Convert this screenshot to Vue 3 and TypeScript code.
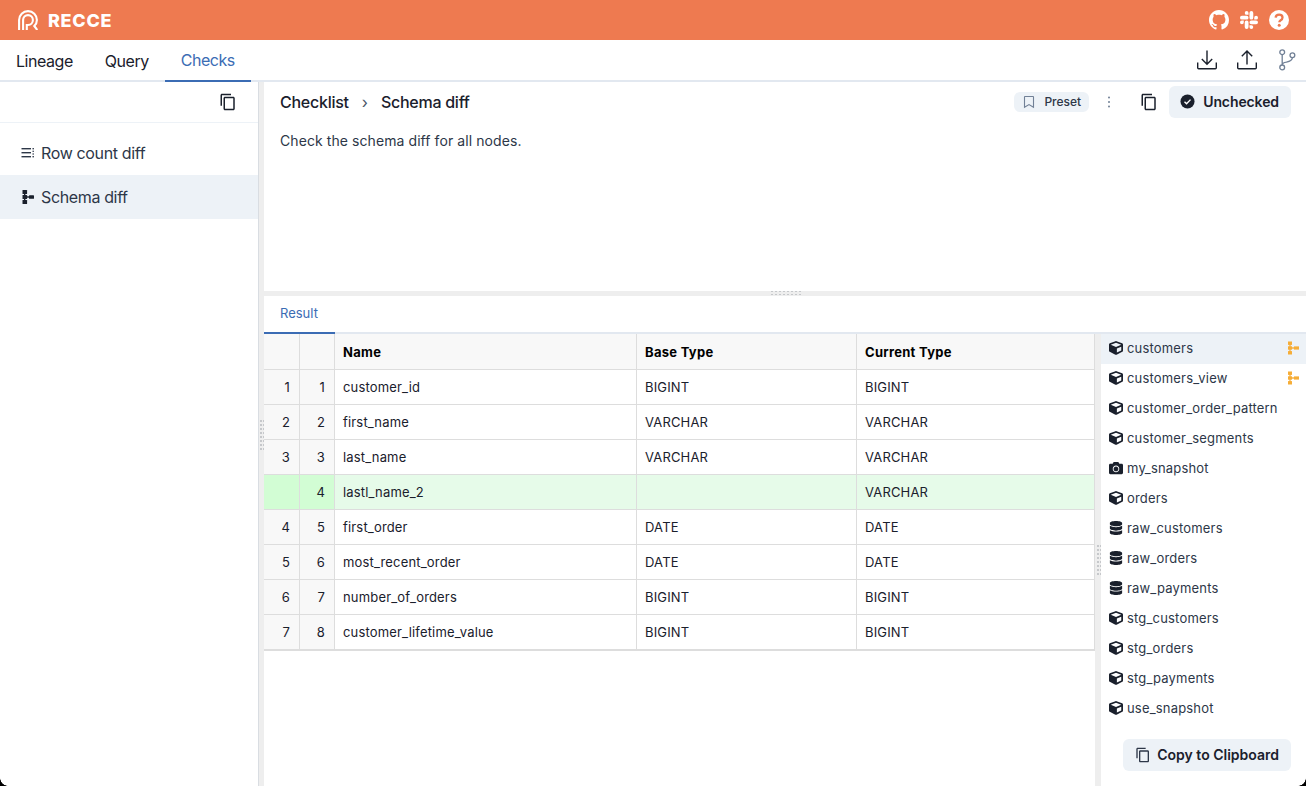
<script setup lang="ts">
type NodeKind = "model" | "snapshot" | "source";

const mainTabs = [
  { label: "Lineage", active: false },
  { label: "Query", active: false },
  { label: "Checks", active: true },
];

const columns = ["Name", "Base Type", "Current Type"];

const rows = [
  { base: "1", current: "1", name: "customer_id", baseType: "BIGINT", currentType: "BIGINT" },
  { base: "2", current: "2", name: "first_name", baseType: "VARCHAR", currentType: "VARCHAR" },
  { base: "3", current: "3", name: "last_name", baseType: "VARCHAR", currentType: "VARCHAR" },
  { base: "", current: "4", name: "lastl_name_2", baseType: "", currentType: "VARCHAR", added: true },
  { base: "4", current: "5", name: "first_order", baseType: "DATE", currentType: "DATE" },
  { base: "5", current: "6", name: "most_recent_order", baseType: "DATE", currentType: "DATE" },
  { base: "6", current: "7", name: "number_of_orders", baseType: "BIGINT", currentType: "BIGINT" },
  { base: "7", current: "8", name: "customer_lifetime_value", baseType: "BIGINT", currentType: "BIGINT" },
];

const nodes: { name: string; kind: NodeKind; changed?: boolean }[] = [
  { name: "customers", kind: "model", changed: true },
  { name: "customers_view", kind: "model", changed: true },
  { name: "customer_order_pattern", kind: "model" },
  { name: "customer_segments", kind: "model" },
  { name: "my_snapshot", kind: "snapshot" },
  { name: "orders", kind: "model" },
  { name: "raw_customers", kind: "source" },
  { name: "raw_orders", kind: "source" },
  { name: "raw_payments", kind: "source" },
  { name: "stg_customers", kind: "model" },
  { name: "stg_orders", kind: "model" },
  { name: "stg_payments", kind: "model" },
  { name: "use_snapshot", kind: "model" },
];

const copyPath =
  "M16 1H4c-1.1 0-2 .9-2 2v14h2V3h12V1zm3 4H8c-1.1 0-2 .9-2 2v14c0 1.1.9 2 2 2h11c1.1 0 2-.9 2-2V7c0-1.1-.9-2-2-2zm0 16H8V7h11v14z";

const kindIcons: Record<NodeKind, { box: string; d: string }> = {
  model: {
    box: "0 0 512 512",
    d: "M239.1 6.3l-208 78c-18.7 7-31.1 25-31.1 45v225.1c0 18.2 10.3 34.8 26.5 42.9l208 104c13.5 6.8 29.4 6.8 42.9 0l208-104c16.3-8.1 26.5-24.8 26.5-42.9V129.3c0-20-12.4-37.9-31.1-44.9l-208-78C262 2.2 250 2.2 239.1 6.3zM256 68.4l192 72v1.1l-192 78-192-78v-1.1l192-72zm32 356V275.5l160-65v133.9l-160 80z",
  },
  snapshot: {
    box: "0 0 512 512",
    d: "M512 144v288c0 26.5-21.5 48-48 48H48c-26.5 0-48-21.5-48-48V144c0-26.5 21.5-48 48-48h88l12.3-32.9c7-18.7 24.9-31.1 44.9-31.1h125.5c20 0 37.9 12.4 44.9 31.1L376 96h88c26.5 0 48 21.5 48 48zM376 288c0-66.2-53.8-120-120-120s-120 53.8-120 120 53.8 120 120 120 120-53.8 120-120zm-32 0c0 48.5-39.5 88-88 88s-88-39.5-88-88 39.5-88 88-88 88 39.5 88 88z",
  },
  source: {
    box: "0 0 448 512",
    d: "M448 73.143v45.714C448 159.143 347.667 192 224 192S0 159.143 0 118.857V73.143C0 32.857 100.333 0 224 0s224 32.857 224 73.143zM448 176v102.857C448 319.143 347.667 352 224 352S0 319.143 0 278.857V176c48.125 33.143 136.208 48.572 224 48.572S399.874 209.143 448 176zm0 160v102.857C448 479.143 347.667 512 224 512S0 479.143 0 438.857V336c48.125 33.143 136.208 48.572 224 48.572S399.874 369.143 448 336z",
  },
};
</script>

<template>
  <div class="app">
    <header class="topbar">
      <div class="brand">
        <svg class="logo" viewBox="0 0 20 20" fill="none" stroke="#fff" stroke-width="2.100">
          <path d="M1.100 20V10a8.900 8.900 0 0 1 17.800 0c0 2.500-1 4.500-2.600 6l3 4" />
          <path d="M5.100 20V10a4.900 4.900 0 0 1 9.800 0c0 2.800-2.100 5-4.900 5H8.800v5" />
        </svg>
        <span class="brand-name">RECCE</span>
      </div>
      <div class="top-links">
        <svg class="top-icon" viewBox="0 0 16 16" fill="#fff">
          <path d="M8 0C3.58 0 0 3.58 0 8c0 3.54 2.29 6.53 5.47 7.59.4.07.55-.17.55-.38 0-.19-.01-.82-.01-1.49-2.01.37-2.53-.49-2.69-.94-.09-.23-.48-.94-.82-1.13-.28-.15-.68-.52-.01-.53.63-.01 1.08.58 1.23.82.72 1.21 1.87.87 2.33.66.07-.52.28-.87.51-1.07-1.78-.2-3.64-.89-3.64-3.95 0-.87.31-1.59.82-2.15-.08-.2-.36-1.02.08-2.12 0 0 .67-.21 2.2.82.64-.18 1.32-.27 2-.27.68 0 1.36.09 2 .27 1.53-1.04 2.2-.82 2.2-.82.44 1.1.16 1.92.08 2.12.51.56.82 1.27.82 2.15 0 3.07-1.87 3.75-3.65 3.95.29.25.54.73.54 1.48 0 1.07-.01 1.93-.01 2.2 0 .21.15.46.55.38A8.013 8.013 0 0016 8c0-4.42-3.58-8-8-8z" />
        </svg>
        <svg class="top-icon slack" viewBox="0 0 24 24" fill="#fff">
          <path d="M5.042 15.165a2.528 2.528 0 0 1-2.52 2.523A2.528 2.528 0 0 1 0 15.165a2.527 2.527 0 0 1 2.522-2.52h2.52v2.52zM6.313 15.165a2.527 2.527 0 0 1 2.521-2.52 2.527 2.527 0 0 1 2.521 2.52v6.313A2.528 2.528 0 0 1 8.834 24a2.528 2.528 0 0 1-2.521-2.522v-6.313zM8.834 5.042a2.528 2.528 0 0 1-2.521-2.52A2.528 2.528 0 0 1 8.834 0a2.528 2.528 0 0 1 2.521 2.522v2.52H8.834zM8.834 6.313a2.528 2.528 0 0 1 2.521 2.521 2.528 2.528 0 0 1-2.521 2.521H2.522A2.528 2.528 0 0 1 0 8.834a2.528 2.528 0 0 1 2.522-2.521h6.312zM18.956 8.834a2.528 2.528 0 0 1 2.522-2.521A2.528 2.528 0 0 1 24 8.834a2.528 2.528 0 0 1-2.522 2.521h-2.522V8.834zM17.688 8.834a2.528 2.528 0 0 1-2.523 2.521 2.527 2.527 0 0 1-2.52-2.521V2.522A2.527 2.527 0 0 1 15.165 0a2.528 2.528 0 0 1 2.523 2.522v6.312zM15.165 18.956a2.528 2.528 0 0 1 2.523 2.522A2.528 2.528 0 0 1 15.165 24a2.527 2.527 0 0 1-2.52-2.522v-2.522h2.52zM15.165 17.688a2.527 2.527 0 0 1-2.52-2.523 2.526 2.526 0 0 1 2.52-2.52h6.313A2.527 2.527 0 0 1 24 15.165a2.528 2.528 0 0 1-2.522 2.523h-6.313z" />
        </svg>
        <svg class="top-icon" viewBox="0 0 20 20">
          <circle cx="10" cy="10" r="10" fill="#fff" />
          <path d="M6.600 7.600C6.800 5.700 8.200 4.600 10.100 4.600c2 0 3.400 1.200 3.400 2.900 0 1.400-.8 2.100-1.800 2.700-.9.6-1.400 1-1.400 2" fill="none" stroke="#ee7a50" stroke-width="2.300" />
          <circle cx="10.200" cy="15.200" r="1.500" fill="#ee7a50" />
        </svg>
      </div>
    </header>

    <nav class="mainnav">
      <a v-for="tab in mainTabs" :key="tab.label" class="navtab" :class="{ active: tab.active }">{{ tab.label }}</a>
      <div class="nav-actions">
        <svg class="nav-icon" viewBox="1 1 20 20" fill="none" stroke="#1a202c" stroke-width="1.400">
          <path d="M1.700 13.500v5.200c0 .6.400 1 1 1h16.600c.6 0 1-.4 1-1v-5.200" />
          <path d="M11 1.500v13.500M5.800 10l5.200 5.200 5.200-5.200" />
        </svg>
        <svg class="nav-icon" viewBox="1 1 20 20" fill="none" stroke="#1a202c" stroke-width="1.400">
          <path d="M1.700 13.500v5.200c0 .6.400 1 1 1h16.600c.6 0 1-.4 1-1v-5.200" />
          <path d="M11 15.500V2M5.800 7.200 11 2l5.200 5.200" />
        </svg>
        <svg class="nav-icon branch" viewBox="0 0 18 22" fill="none" stroke="#718096" stroke-width="1.300">
          <circle cx="4.200" cy="3.200" r="2.400" />
          <circle cx="4.200" cy="18.400" r="2.400" />
          <circle cx="14.400" cy="6.200" r="2.400" />
          <path d="M4.200 5.600v10.400M14.400 8.600c0 3-3 4-6 4.600-2.400.4-4.200 1-4.200 2.800" />
        </svg>
      </div>
    </nav>

    <main class="workspace">
      <aside class="sidebar">
        <div class="sidebar-head">
          <svg class="copy-icon" viewBox="0 0 24 24" fill="#1a202c"><path :d="copyPath" /></svg>
        </div>
        <ul class="checklist">
          <li class="check-item">
            <svg class="check-icon" viewBox="0 0 14 14" fill="#2d3748">
              <rect x="0.500" y="2" width="9.500" height="1.400" />
              <rect x="0.500" y="6" width="9.500" height="1.400" />
              <rect x="0.500" y="10" width="9.500" height="1.400" />
              <rect x="11.500" y="2" width="1.400" height="1.400" />
              <rect x="11.500" y="4.700" width="1.400" height="1.200" />
              <rect x="11.500" y="7.400" width="1.400" height="1.200" />
              <rect x="11.500" y="10" width="1.400" height="1.400" />
            </svg>
            Row count diff
          </li>
          <li class="check-item selected">
            <svg class="check-icon" viewBox="0 0 14 14" fill="#1a202c">
              <rect x="1.500" y="0" width="4.600" height="4" rx="0.600" />
              <rect x="1.500" y="5" width="4.600" height="4" rx="0.600" />
              <rect x="1.500" y="10" width="4.600" height="4" rx="0.600" />
              <rect x="3" y="3" width="1.400" height="8" />
              <rect x="6" y="6.300" width="2" height="1.400" />
              <rect x="8" y="5.200" width="5" height="3.600" rx="0.600" />
            </svg>
            Schema diff
          </li>
        </ul>
      </aside>

      <div class="vsplit"><span class="grip grip-v"></span></div>

      <section class="detail">
        <div class="detail-top">
          <div class="detail-head">
            <span class="crumb">Checklist</span>
            <span class="crumb-sep">›</span>
            <span class="crumb">Schema diff</span>
            <span class="spacer"></span>
            <span class="preset">
              <svg viewBox="0 0 14 14" width="14" height="14" fill="none" stroke="#718096" stroke-width="1.100">
                <path d="M3 1.500h8c.3 0 .5.2.5.5v10.300L7 9.600l-4.500 2.700V2c0-.3.2-.5.5-.5z" />
              </svg>
              Preset
            </span>
            <svg class="kebab" viewBox="0 0 4 14" width="4" height="14" fill="#718096">
              <circle cx="2" cy="2.500" r="1" />
              <circle cx="2" cy="7" r="1" />
              <circle cx="2" cy="11.500" r="1" />
            </svg>
            <svg class="copy-icon head-copy" viewBox="0 0 24 24" fill="#1a202c"><path :d="copyPath" /></svg>
            <button class="btn status-btn">
              <svg viewBox="0 0 16 16" width="15" height="15">
                <circle cx="8" cy="8" r="7.500" fill="#1a202c" />
                <path d="M4.800 8.200l2.200 2.200 4.200-4.400" fill="none" stroke="#fff" stroke-width="1.500" />
              </svg>
              Unchecked
            </button>
          </div>
          <p class="description">Check the schema diff for all nodes.</p>
        </div>

        <div class="hsplit"><span class="grip grip-h"></span></div>

        <div class="result">
          <div class="result-tabs"><a class="result-tab">Result</a></div>
          <div class="result-body">
            <div class="table-wrap">
              <div class="grid">
                <div class="cell head idx"></div>
                <div class="cell head idx"></div>
                <div v-for="col in columns" :key="col" class="cell head">{{ col }}</div>
                <template v-for="row in rows" :key="row.current">
                  <div class="cell idx num" :class="{ 'idx-added': row.added }">{{ row.base }}</div>
                  <div class="cell idx num" :class="{ 'idx-added': row.added }">{{ row.current }}</div>
                  <div class="cell" :class="{ added: row.added }">{{ row.name }}</div>
                  <div class="cell" :class="{ added: row.added }">{{ row.baseType }}</div>
                  <div class="cell" :class="{ added: row.added }">{{ row.currentType }}</div>
                </template>
              </div>
            </div>
            <div class="vsplit-inner"><span class="grip grip-v"></span></div>
            <div class="node-panel">
              <ul class="node-list">
                <li v-for="(node, i) in nodes" :key="node.name" class="node-item" :class="{ selected: i === 0 }">
                  <svg class="node-icon" :viewBox="kindIcons[node.kind].box" fill="#1a202c">
                    <path :d="kindIcons[node.kind].d" />
                  </svg>
                  <span class="node-name">{{ node.name }}</span>
                  <svg v-if="node.changed" class="changed-icon" viewBox="0 0 14 14" fill="#f6ad37">
                    <rect x="1" y="0.500" width="4" height="3.400" />
                    <rect x="1" y="5.300" width="4" height="3.400" />
                    <rect x="1" y="10.100" width="4" height="3.400" />
                    <rect x="2.400" y="3" width="1.200" height="8" />
                    <rect x="5" y="6.300" width="2" height="1.400" />
                    <rect x="7" y="5.400" width="5" height="3.200" />
                  </svg>
                </li>
              </ul>
              <button class="btn clipboard-btn">
                <svg class="clip-icon" viewBox="0 0 24 24" fill="#2d3748"><path :d="copyPath" /></svg>
                Copy to Clipboard
              </button>
            </div>
          </div>
        </div>
      </section>
    </main>

    <span class="corner corner-left"></span>
    <span class="corner corner-right"></span>
  </div>
</template>

<style>
html,
body {
  margin: 0;
  background: #fff;
}
</style>

<style scoped>
.app {
  position: relative;
  width: 1306px;
  height: 786px;
  display: flex;
  flex-direction: column;
  overflow: hidden;
  font-family: Inter, "Noto Sans", "Liberation Sans", sans-serif;
  color: #1a202c;
  background: #fff;
}

/* window's rounded corners show up in the screenshot */
.corner {
  position: absolute;
  bottom: 0;
  width: 8px;
  height: 8px;
}

.corner-left {
  left: 0;
  background: radial-gradient(circle at 100% 0, transparent 7.500px, #000 8px);
}

.corner-right {
  right: 0;
  background: radial-gradient(circle at 0 0, transparent 7.500px, #000 8px);
}

.topbar {
  height: 40px;
  flex: none;
  display: flex;
  align-items: center;
  justify-content: space-between;
  padding: 0 17px 0 18px;
  background: #ee7a50;
}

.brand {
  display: flex;
  align-items: center;
  gap: 10px;
}

.logo {
  width: 20px;
  height: 20px;
}

.brand-name {
  color: #fff;
  font-size: 18px;
  font-weight: 800;
  letter-spacing: 0.7px;
}

.top-links {
  display: flex;
  align-items: center;
  gap: 11px;
}

.top-icon {
  width: 20px;
  height: 20px;
}

.top-icon.slack {
  width: 18px;
  height: 18px;
}

.mainnav {
  height: 42px;
  flex: none;
  display: flex;
  box-sizing: border-box;
  border-bottom: 2px solid #e2e8f0;
}

.navtab {
  height: 42px;
  box-sizing: border-box;
  padding: 0 16px;
  display: flex;
  align-items: center;
  font-size: 16px;
  letter-spacing: -0.46px;
}

.navtab.active {
  color: #3b6cb4;
  border-bottom: 2px solid #3b6cb4;
}

.nav-actions {
  margin-left: auto;
  display: flex;
  align-items: center;
  gap: 20px;
  padding-right: 10px;
}

.nav-icon {
  width: 20px;
  height: 20px;
}

.nav-icon.branch {
  width: 18px;
  height: 22px;
  margin-left: 1px;
}

.workspace {
  flex: 1;
  min-height: 0;
  display: flex;
}

.sidebar {
  width: 258px;
  flex: none;
}

.sidebar-head {
  height: 41px;
  box-sizing: border-box;
  display: flex;
  align-items: center;
  justify-content: flex-end;
  padding-right: 21px;
  border-bottom: 1px solid #edf2f7;
}

.copy-icon {
  width: 18px;
  height: 18px;
}

.checklist {
  list-style: none;
  margin: 0;
  padding: 8px 0 0;
}

.check-item {
  height: 44px;
  display: flex;
  align-items: center;
  gap: 6px;
  padding-left: 21px;
  font-size: 16px;
  letter-spacing: -0.36px;
  color: #2d3748;
}

.check-item.selected {
  background: #edf2f7;
}

.check-icon {
  width: 14px;
  height: 14px;
}

.vsplit {
  width: 6px;
  flex: none;
  position: relative;
  box-sizing: border-box;
  border-left: 1px solid #d9dde2;
  background: #eeeeee;
}

.detail {
  flex: 1;
  min-width: 0;
  display: flex;
  flex-direction: column;
}

.detail-top {
  height: 209px;
  flex: none;
}

.detail-head {
  height: 40px;
  display: flex;
  align-items: center;
  padding: 0 15px 0 16px;
  box-sizing: border-box;
}

.crumb {
  font-size: 16px;
  font-weight: 500;
  letter-spacing: -0.26px;
}

.crumb-sep {
  margin: 0 13px;
  font-size: 16px;
  color: #4a5568;
}

.spacer {
  flex: 1;
}

.preset {
  height: 20px;
  display: flex;
  align-items: center;
  gap: 8px;
  padding: 0 8px 1px;
  box-sizing: border-box;
  font-size: 12px;
  font-weight: 500;
  color: #2d3748;
  background: #edf2f7;
  border-radius: 6px;
}

.kebab {
  margin-left: 18px;
}

.head-copy {
  margin-left: 29px;
}

.btn {
  border: 0;
  display: flex;
  align-items: center;
  font-family: inherit;
  font-weight: 600;
  font-size: 14px;
  color: #1a202c;
  background: #edf2f7;
  border-radius: 6px;
}

.status-btn {
  height: 32px;
  margin-left: 11px;
  padding: 0 12px 1px 11px;
  gap: 8px;
  letter-spacing: -0.1px;
}

.description {
  margin: 0;
  padding: 9px 16px 0;
  font-size: 14px;
  line-height: 20px;
  letter-spacing: 0.08px;
  color: #2d3748;
}

.hsplit {
  height: 5px;
  flex: none;
  position: relative;
  background: #eeeeee;
}

.grip {
  position: absolute;
  background-image: conic-gradient(#c6c8cb 25%, transparent 0);
}

.grip-h {
  width: 32px;
  height: 5px;
  left: 505px;
  top: 0;
  background-size: 4px 3px;
}

.grip-v {
  width: 5px;
  height: 30px;
  left: 0;
  top: 338px;
  background-size: 3px 4px;
}

.result {
  flex: 1;
  min-height: 0;
  display: flex;
  flex-direction: column;
}

.result-tabs {
  height: 38px;
  flex: none;
  box-sizing: border-box;
  border-bottom: 2px solid #e2e8f0;
}

.result-tab {
  display: flex;
  align-items: center;
  width: 71px;
  height: 38px;
  box-sizing: border-box;
  padding: 0 0 2px 16px;
  font-size: 13px;
  color: #3b6cb4;
  border-bottom: 2px solid #3b6cb4;
}

.result-body {
  flex: 1;
  min-height: 0;
  display: flex;
}

.table-wrap {
  width: 831px;
  flex: none;
}

.grid {
  display: grid;
  grid-template-columns: 36px 35px 302px 220px 237px;
  grid-template-rows: 36px;
  grid-auto-rows: 35px;
  border-bottom: 1px solid #ddd;
  border-right: 1px solid #ddd;
  font-size: 13px;
  letter-spacing: 0.17px;
}

.cell {
  box-sizing: border-box;
  display: flex;
  align-items: center;
  padding: 0 8px;
  border-right: 1px solid #ddd;
  border-bottom: 1px solid #ddd;
  color: #1a202c;
}

.cell:nth-child(5n) {
  border-right: 0;
}

.cell.head {
  font-weight: 700;
  letter-spacing: 0.28px;
  color: #000;
  background: #f8f8f8;
}

.cell.idx {
  justify-content: flex-end;
  padding-right: 9px;
  background: #f8f8f8;
}

.cell.added {
  background: #e6fbe9;
}

.cell.idx-added {
  background: #d2fdd4;
}

.vsplit-inner {
  width: 6px;
  flex: none;
  position: relative;
  background: #eeeeee;
}

.vsplit-inner .grip-v {
  left: 1px;
  top: 211px;
}

.node-panel {
  flex: 1;
  min-width: 0;
  display: flex;
  flex-direction: column;
}

.node-list {
  list-style: none;
  margin: 0;
  padding: 0;
}

.node-item {
  height: 30px;
  box-sizing: border-box;
  display: flex;
  align-items: center;
  padding: 0 10px 2px 8px;
  gap: 5px;
  font-size: 13px;
  letter-spacing: 0.18px;
  color: #2d3748;
}

.node-item.selected {
  background: #edf2f7;
}

.node-icon {
  width: 14px;
  height: 14px;
  flex: none;
  margin-right: -1px;
}

.node-name {
  flex: 1;
}

.changed-icon {
  width: 14px;
  height: 14px;
  margin-right: -5px;
}

.clipboard-btn {
  align-self: flex-end;
  height: 32px;
  margin: 15px 15px 0 0;
  padding: 0 12px 1px;
  gap: 6px;
}

.clip-icon {
  width: 16px;
  height: 16px;
}
</style>
